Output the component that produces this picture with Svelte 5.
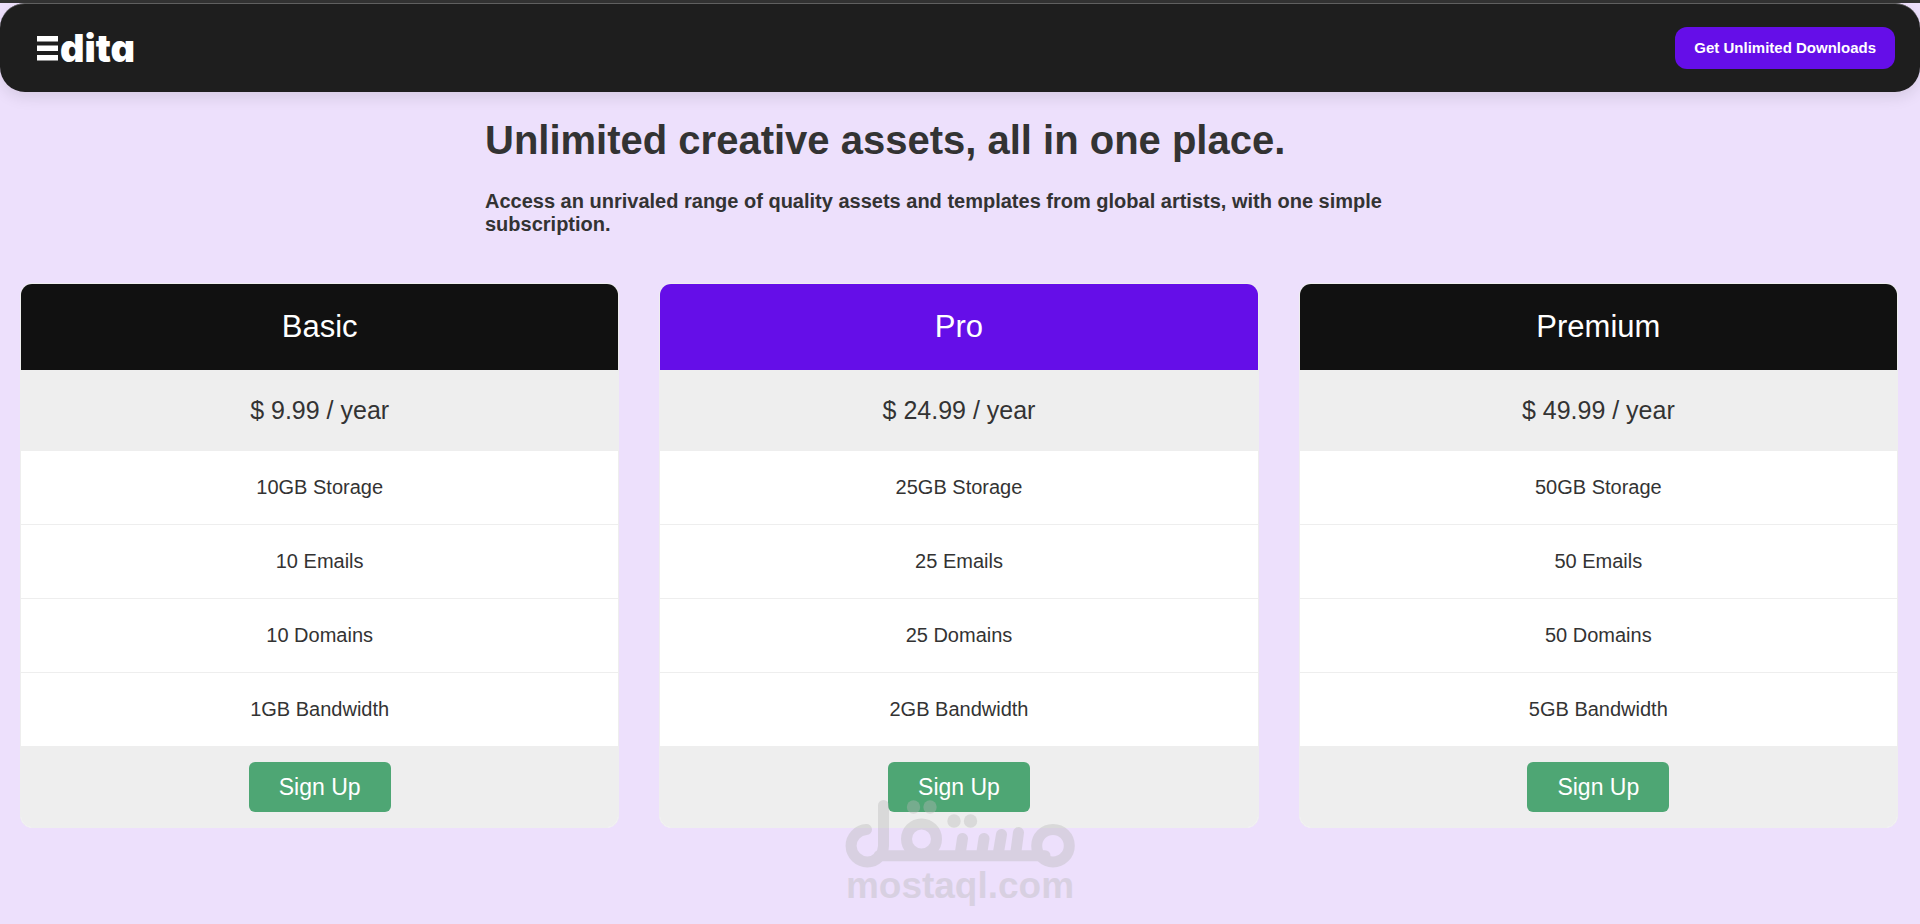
<script>
    const plans = [
        { name: 'Basic', price: '$ 9.99 / year', features: ['10GB Storage', '10 Emails', '10 Domains', '1GB Bandwidth'] },
        { name: 'Pro', price: '$ 24.99 / year', features: ['25GB Storage', '25 Emails', '25 Domains', '2GB Bandwidth'], featured: true },
        { name: 'Premium', price: '$ 49.99 / year', features: ['50GB Storage', '50 Emails', '50 Domains', '5GB Bandwidth'] }
    ];
</script>

<div class="page">
    <header class="navbar">
        <a class="logo" href="#home" aria-label="Edita">
            <svg class="logo-mark" viewBox="0 0 21 25" aria-hidden="true">
                <rect width="21" height="5.500" />
                <rect y="9.500" width="21" height="5.500" />
                <rect y="19" width="21" height="5.500" />
            </svg>
            <span>dita</span>
        </a>
        <button class="download-button" type="button">Get Unlimited Downloads</button>
    </header>

    <main>
        <section class="intro">
            <h1>Unlimited creative assets, all in one place.</h1>
            <h3>Access an unrivaled range of quality assets and templates from global artists, with one simple subscription.</h3>
        </section>

        <section class="plans">
            {#each plans as plan}
                <ul class="price">
                    <li class="header" class:featured={plan.featured}>{plan.name}</li>
                    <li class="grey amount">{plan.price}</li>
                    {#each plan.features as feature}
                        <li>{feature}</li>
                    {/each}
                    <li class="grey signup"><a href="#signup" class="button">Sign Up</a></li>
                </ul>
            {/each}
        </section>
    </main>

    <div class="watermark">
        <svg viewBox="0 0 230 68" aria-hidden="true">
            <g fill="none" stroke="currentColor" stroke-width="11" stroke-linecap="round" stroke-linejoin="round">
                <path d="M21.500 29.500A16.200 16.200 0 1 0 38.500 46V5.500M34 55.700H200M117.500 38.500L115 55M139 38.500L136.500 55M156.500 34.500L153 55M173.500 32.500L170.500 55" />
                <circle cx="76.500" cy="39" r="15" />
                <circle cx="208" cy="45.700" r="16.300" />
            </g>
            <g fill="currentColor">
                <circle cx="68.500" cy="7" r="6.700" />
                <circle cx="85" cy="7" r="6.700" />
                <circle cx="109" cy="21" r="6.700" />
                <circle cx="125.500" cy="21" r="6.700" />
            </g>
        </svg>
        <span>mostaql.com</span>
    </div>
</div>

<style>
    :global(body) {
        margin: 0;
        background: #ede0fc;
        font-family: "Liberation Sans", Arial, sans-serif;
        color: #333;
    }

    .page {
        border-top: 3px solid #333;
    }

    .navbar {
        display: flex;
        align-items: center;
        justify-content: space-between;
        padding: 23px 25px 23px 37px;
        background: #1e1e1e;
        border-top: 1px solid #606060;
        border-radius: 25px;
        box-shadow: 0 5px 15px rgba(0, 0, 0, 0.1);
    }

    .logo {
        display: flex;
        align-items: center;
        gap: 2px;
        color: #fff;
        text-decoration: none;
        font-family: Inter, sans-serif;
        font-size: 38px;
        font-weight: 900;
        font-feature-settings: "cv11";
        line-height: 42px;
    }

    .logo-mark {
        width: 21px;
        height: 25px;
        fill: #fff;
    }

    .download-button {
        padding: 0 19px;
        border: none;
        border-radius: 12px;
        background: #650ee8;
        color: #fff;
        font-family: inherit;
        font-size: 15px;
        font-weight: bold;
        line-height: 42px;
        cursor: pointer;
    }

    .intro {
        max-width: 950px;
        margin: 0 auto;
        padding: 25px 0 27px;
    }

    h1 {
        margin: 0;
        font-size: 40px;
        line-height: 46px;
    }

    h3 {
        margin: 27px 0 20px;
        font-size: 20px;
        line-height: 23px;
    }

    .plans {
        display: grid;
        grid-template-columns: repeat(3, 1fr);
        gap: 40px;
        padding: 0 22px 0 20px;
    }

    .price {
        margin: 0;
        padding: 0;
        list-style: none;
        border: 1px solid #eee;
        border-radius: 12px;
        overflow: hidden;
        background: #fff;
    }

    .price li {
        padding: 25px;
        border-bottom: 1px solid #eee;
        font-size: 20px;
        line-height: 23px;
        text-align: center;
    }

    .price .header {
        background: #111;
        color: #fff;
        font-size: 31px;
        line-height: 36px;
    }

    .price .featured {
        background: #650ee8;
    }

    .price .grey {
        background: #eee;
    }

    .price .amount {
        font-size: 25px;
        line-height: 29px;
    }

    .price .signup {
        padding: 15px;
        border-bottom: none;
    }

    .button {
        display: inline-block;
        padding: 0 30px;
        border-radius: 6px;
        background: #4ea674;
        color: #fff;
        font-size: 23px;
        line-height: 50px;
        text-decoration: none;
        vertical-align: top;
    }

    /* Floats over the bottom edge of the plans */
    .watermark {
        position: absolute;
        top: 800px;
        left: 50%;
        width: 230px;
        margin-left: -115px;
        color: #b8b8b8;
        opacity: 0.38;
        text-align: center;
        font-size: 37px;
        font-weight: bold;
        line-height: 36px;
        pointer-events: none;
    }

    .watermark svg {
        display: block;
        width: 230px;
        height: 68px;
    }
</style>
